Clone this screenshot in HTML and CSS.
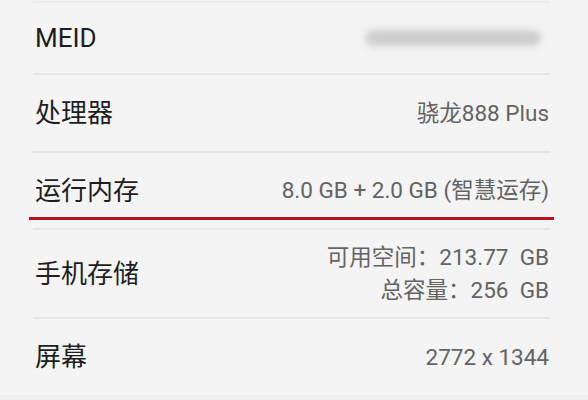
FILE: index.html
```html
<!DOCTYPE html>
<html lang="zh-CN">
<head>
<meta charset="utf-8">
<title>关于手机</title>
<link rel="stylesheet" href="styles.css">
</head>
<body>
<div class="list">
  <div class="row row-meid">
    <span class="label">MEID</span>
    <span class="blurred" aria-hidden="true"></span>
  </div>
  <div class="row row-cpu">
    <span class="label">处理器</span>
    <span class="value">骁龙888 Plus</span>
  </div>
  <div class="row row-ram">
    <span class="label">运行内存</span>
    <span class="value">8.0 GB + 2.0 GB (智慧运存)</span>
    <span class="mark"></span>
  </div>
  <div class="row row-storage">
    <span class="label">手机存储</span>
    <span class="value value-multi"><span>可用空间：213.77  GB</span><span>总容量：256  GB</span></span>
  </div>
  <div class="row row-screen">
    <span class="label">屏幕</span>
    <span class="value">2772 x 1344</span>
  </div>
</div>
<div class="bottom"></div>
</body>
</html>
```

FILE: styles.css
```css
html, body {
  margin: 0;
  padding: 0;
}
body {
  width: 588px;
  height: 400px;
  overflow: hidden;
  background: #f4f4f4;
  font-family: Roboto, "Noto Sans CJK SC", sans-serif;
  display: flex;
  flex-direction: column;
}
.list {
  padding: 1px 38px 0 33px;
  display: flex;
  flex-direction: column;
}
.row {
  display: flex;
  align-items: center;
  justify-content: space-between;
  padding: 0 1px 0 2px;
  border-bottom: 2px solid #e6e6e6;
  position: relative;
}
.row-meid {
  border-top: 2px solid #ececec;
  height: 70px;
}
.row-cpu { height: 76px; }
.row-ram { height: 75px; }
.row-storage { height: 87px; }
.row-screen { height: 76px; border-bottom: none; }
.label {
  font-size: 26px;
  color: #1e1e1e;
  line-height: 1;
}
.value {
  font-size: 22.5px;
  color: #636363;
  line-height: 1;
  white-space: pre;
}
.value-multi {
  display: flex;
  flex-direction: column;
  align-items: flex-end;
  line-height: 33px;
}
.blurred {
  width: 176px;
  height: 16px;
  margin-right: 8px;
  background: #cdcdcd;
  border-radius: 8px;
  filter: blur(3.5px);
}
.mark {
  position: absolute;
  left: -4px;
  right: -4px;
  bottom: 8px;
  height: 3px;
  background: #b8121c;
}
.bottom {
  flex: 1;
  background: #eeeeee;
}
```
